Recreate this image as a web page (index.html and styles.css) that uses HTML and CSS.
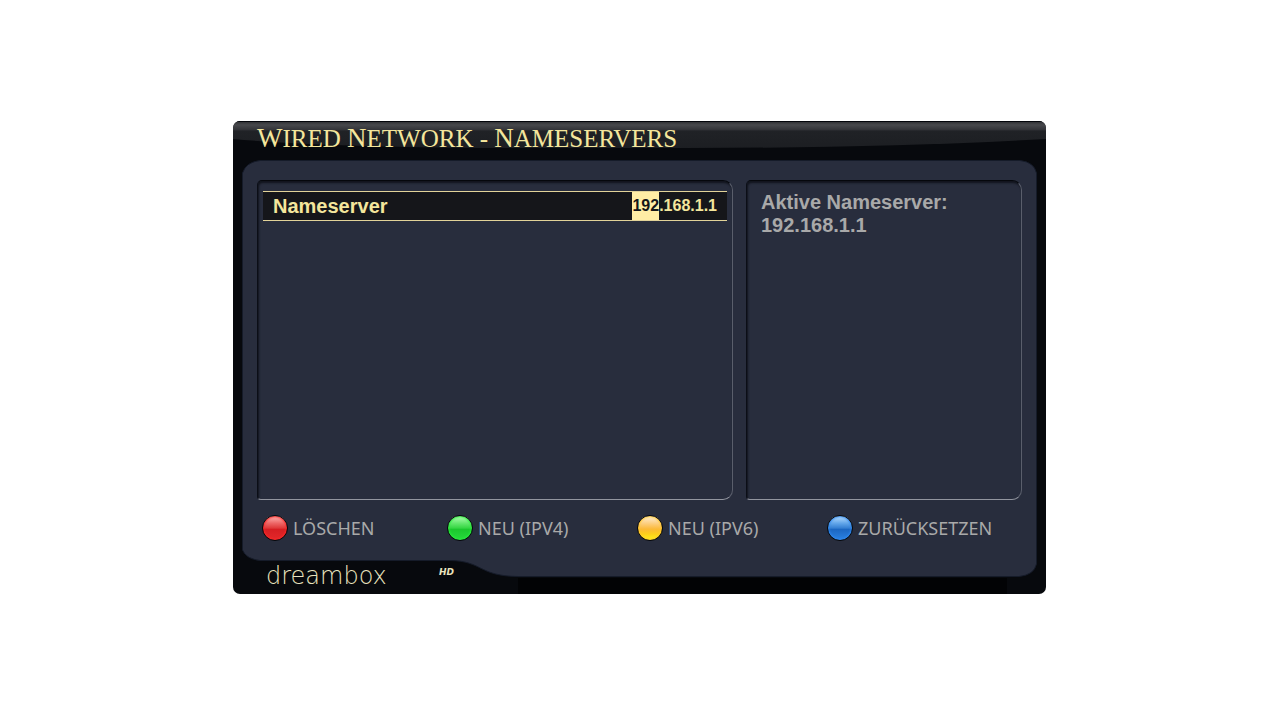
FILE: index.html
```html
<!DOCTYPE html>
<html lang="de">
<head>
<meta charset="utf-8">
<meta name="viewport" content="width=device-width, initial-scale=1">
<title>Wired Network - Nameservers</title>
<link rel="stylesheet" href="styles.css">
</head>
<body>
<main class="dialog">
  <svg class="frame" viewBox="0 0 813 473" preserveAspectRatio="none" aria-hidden="true">
    <defs>
      <linearGradient id="gloss" x1="0" y1="0" x2="0" y2="28" gradientUnits="userSpaceOnUse">
        <stop offset="0" stop-color="#2b2c30"/>
        <stop offset=".14" stop-color="#47484c"/>
        <stop offset=".3" stop-color="#34353a"/>
        <stop offset=".36" stop-color="#202226"/>
        <stop offset="1" stop-color="#1c1e22"/>
      </linearGradient>
    </defs>
    <rect width="813" height="473" fill="#07090d"/>
    <rect x="285" y="457" width="489" height="16" fill="#020305"/>
    <path d="M0 1H813V18Q650 27 450 27H260Q90 26 0 18Z" fill="url(#gloss)"/>
    <path d="M0 .5H813" stroke="#03050b"/>
    <path d="M9.500 52Q13 41 27 39.500H787Q801 41 803.500 52V443Q801 454 786 455.500H285C245 455 250 440 217 439.500H27Q13 438 9.500 429Z" fill="#282d3d" stroke="#151b29"/>
  </svg>
  <h1 class="title"><span class="cap">W</span>ired <span class="cap">N</span>etwork - <span class="cap">N</span>ameservers</h1>
  <div class="panels">
    <section class="panel">
      <div class="row">
        <span class="row-label">Nameserver</span>
        <span class="row-value"><mark class="selected">192</mark>.168.1.1</span>
      </div>
    </section>
    <section class="panel panel-info">
      <p class="info">Aktive Nameserver:<br>192.168.1.1</p>
    </section>
  </div>
  <div class="actions">
    <button class="action" type="button"><span class="dot dot-red"></span>LÖSCHEN</button>
    <button class="action" type="button"><span class="dot dot-green"></span>NEU (IPV4)</button>
    <button class="action" type="button"><span class="dot dot-yellow"></span>NEU (IPV6)</button>
    <button class="action" type="button"><span class="dot dot-blue"></span>ZURÜCKSETZEN</button>
  </div>
  <footer class="brand"><span class="brand-name">dreambox</span><span class="brand-hd">HD</span></footer>
</main>
</body>
</html>
```
FILE: styles.css
```css
* { box-sizing: border-box; }
body {
  margin: 0;
  min-height: 100vh;
  padding: 0 1px 5px 0;
  display: flex;
  align-items: center;
  justify-content: center;
  background: #fff;
  font-family: "Liberation Sans", Arial, sans-serif;
}
.dialog {
  position: relative;
  isolation: isolate;
  width: 100%;
  max-width: 813px;
  border-radius: 7px;
  overflow: hidden;
}
.frame {
  position: absolute;
  inset: 0;
  z-index: -1;
  width: 100%;
  height: 100%;
}
.title {
  margin: 0;
  padding: 0 24px;
  font: 400 25px/35px "Liberation Serif", "Times New Roman", serif;
  text-transform: uppercase;
  color: #f4e69c;
}
.cap { font-size: 27px; }
.panels {
  display: grid;
  grid-template-columns: 476fr 276fr;
  gap: 13px;
  padding: 24px 24px 0;
}
.panel {
  min-height: 320px;
  padding: 11px 5px;
  border: 1px solid;
  border-color: #05070c #5a5e6b #92959f #0b0e16;
  border-radius: 5px 10px 10px 4px;
  box-shadow: inset 1px 2px 2px #11141d;
}
.panel-info { padding: 10px 14px; }
.row {
  display: flex;
  justify-content: space-between;
  height: 30px;
  margin-top: -1px;
  padding: 0 10px;
  border: solid #e2d399;
  border-width: 1px 0;
  background: #15161a;
  color: #f4e69c;
  font-weight: 700;
  line-height: 28px;
}
.row-label { font-size: 20px; }
.row-value { font-size: 16px; }
.selected {
  display: inline-block;
  background: #ffeda5;
  color: #15161a;
}
.info {
  margin: 0;
  color: #a9a9a9;
  font-size: 20px;
  font-weight: 700;
  line-height: 23px;
}
.actions {
  display: grid;
  grid-template-columns: 185fr 190fr 190fr 190fr;
  padding: 14px 29px 0;
}
.action {
  display: flex;
  align-items: center;
  gap: 5px;
  padding: 0;
  border: 0;
  background: none;
  color: #a9a9a9;
  font: 400 18px/28px "Noto Sans", sans-serif;
  white-space: nowrap;
}
.dot {
  width: 26px;
  height: 26px;
  border: 1px solid #05070b;
  border-radius: 50%;
}
.dot-red {
  background: linear-gradient(#ffb8b4, #ed6666 30%, #df3a3a 50%, #d61e22 56%, #e3292b);
  box-shadow: inset 0 0 2px 1px #fb2727;
}
.dot-green {
  background: linear-gradient(#b6ffb5, #64e76d 30%, #36d644 50%, #1cc72e 56%, #27db3d);
  box-shadow: inset 0 0 2px 1px #29ec3d;
}
.dot-yellow {
  background: linear-gradient(#fff0d8, #fccd7c 32%, #fbb936 55%, #fdce1b 75%, #fff51b);
  box-shadow: inset 0 0 2px 1px #ffc82d;
}
.dot-blue {
  background: linear-gradient(#bce0ff, #62a6ea 30%, #3580d3 50%, #1c67c2 56%, #2b82e4);
  box-shadow: inset 0 0 2px 1px #3188ed;
}
.brand {
  display: flex;
  justify-content: space-between;
  max-width: 221px;
  margin-top: 24px;
  padding: 0 0 6px 33px;
  height: 28px;
  color: #e9e3bf;
}
.brand-name { font: 200 24px/20px "DejaVu Sans", sans-serif; }
.brand-hd { font: italic 700 9px/12px "DejaVu Sans", sans-serif; }
```
